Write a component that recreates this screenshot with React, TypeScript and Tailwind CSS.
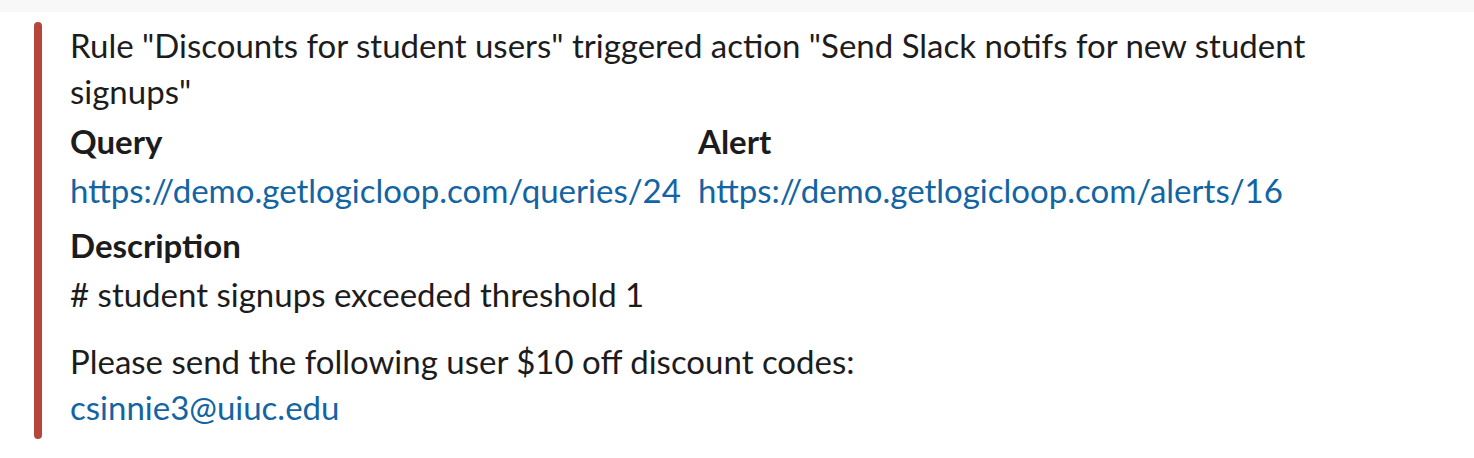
export default function App() {
  return (
    <div className="w-[1474px] h-[458px] bg-white text-[#1d1c1d] font-['Lato','Liberation_Sans',sans-serif] overflow-hidden">
      <div className="h-[12px] bg-[#f8f8f8]" />
      <div className="flex pl-[34px] pt-[10px]">
        <div className="w-[8px] h-[417px] rounded-full bg-[#b4463b] shrink-0" />
        <div className="ml-[28px] w-[1256px] text-[33px] leading-[46px]">
          <div>
            Rule "Discounts for student users" triggered action "Send Slack notifs for new student signups"
          </div>
          <div className="grid grid-cols-2 mt-[4px]">
            <div>
              <div className="font-bold">Query</div>
              <a className="block mt-[3px] text-[#1264a3]">https://demo.getlogicloop.com/queries/24</a>
            </div>
            <div>
              <div className="font-bold">Alert</div>
              <a className="block mt-[3px] text-[#1264a3]">https://demo.getlogicloop.com/alerts/16</a>
            </div>
          </div>
          <div className="mt-[9px]">
            <div className="font-bold">Description</div>
            <div className="mt-[3px]"># student signups exceeded threshold 1</div>
            <div className="mt-[21px]">Please send the following user $10 off discount codes:</div>
            <a className="block text-[#1264a3]">csinnie3@uiuc.edu</a>
          </div>
        </div>
      </div>
    </div>
  )
}
